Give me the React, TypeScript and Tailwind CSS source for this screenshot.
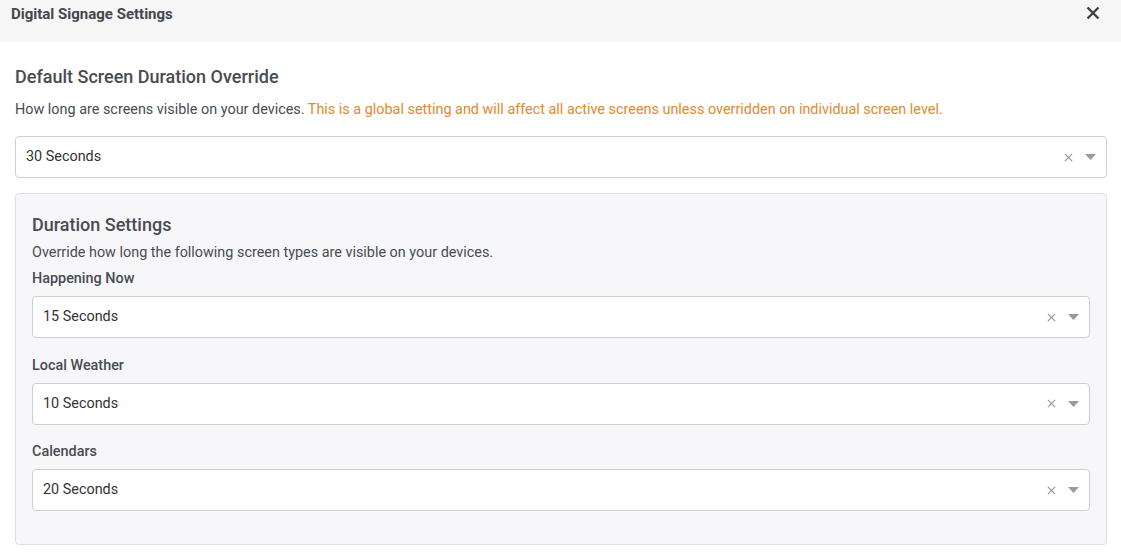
// Digital signage settings modal — duration overrides
const durations = [
  { label: 'Happening Now', value: '15 Seconds' },
  { label: 'Local Weather', value: '10 Seconds' },
  { label: 'Calendars', value: '20 Seconds' },
];

function SelectBox({ value }: { value: string }) {
  return (
    <div className="flex items-center h-[42px] rounded-[4px] border border-[#cfcfcf] bg-white pl-[10px] pr-[10px]">
      <span className="flex-1 text-[14.4px] text-[#333]">{value}</span>
      <svg width="9" height="9" viewBox="0 0 10 10" className="mr-[12px]">
        <path d="M1 1L9 9M9 1L1 9" stroke="#9a9a9a" strokeWidth="1.4" />
      </svg>
      <svg width="11" height="6" viewBox="0 0 11 6">
        <path d="M0 0H11L5.5 6Z" fill="#9a9a9a" />
      </svg>
    </div>
  );
}

export default function App() {
  return (
    <div className="w-[1121px] h-[558px] overflow-hidden bg-white font-['Roboto',sans-serif] text-[#484c52]">
      {/* ── Header ── */}
      <div className="flex items-start justify-between h-[42px] bg-[#f6f6f6] pl-[11px] pr-[21px] pt-[3px]">
        <h1 className="text-[15px] font-bold text-[#44484e]">Digital Signage Settings</h1>
        <svg width="14" height="14" viewBox="0 0 14 14" className="mt-[3px]">
          <path d="M1.5 1.5L12.5 12.5M12.5 1.5L1.5 12.5" stroke="#3d4147" strokeWidth="2.4" />
        </svg>
      </div>

      {/* ── Body ── */}
      <div className="pl-[15px] pr-[14px] pt-[22px]">
        <h2 className="text-[18px] font-medium leading-[26px]">Default Screen Duration Override</h2>
        <p className="mt-[10px] text-[14.4px] leading-[20px]">
          How long are screens visible on your devices.{' '}
          <span className="text-[#e08a2e]">
            This is a global setting and will affect all active screens unless overridden on individual screen level.
          </span>
        </p>
        <div className="mt-[16px]">
          <SelectBox value="30 Seconds" />
        </div>

        <div className="mt-[15px] rounded-[4px] border border-[#dedfe2] bg-[#f7f7f9] px-[16px] pt-[18px] pb-[33px]">
          <h3 className="text-[18px] font-medium leading-[26px]">Duration Settings</h3>
          <p className="mt-[5px] text-[14.4px] leading-[20px]">
            Override how long the following screen types are visible on your devices.
          </p>
          <div className="flex flex-col gap-[17.5px] mt-[6px]">
            {durations.map((d) => (
              <div key={d.label}>
                <div className="text-[14.4px] font-medium leading-[20px] mb-[7px]">{d.label}</div>
                <SelectBox value={d.value} />
              </div>
            ))}
          </div>
        </div>
      </div>
    </div>
  );
}
